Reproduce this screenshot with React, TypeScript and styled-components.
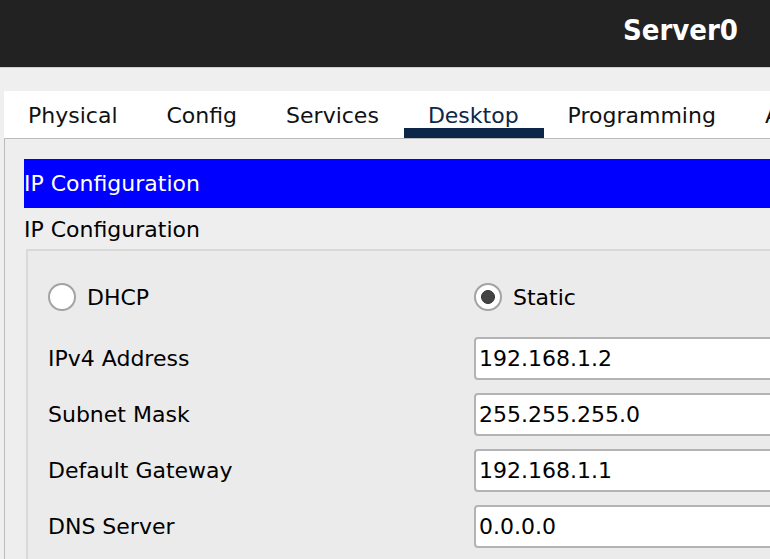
import React from "react";
import styled, { createGlobalStyle } from "styled-components";

const Global = createGlobalStyle`
  html, body {
    margin: 0;
    padding: 0;
    background: #efefef;
    overflow: hidden;
  }
  body {
    font-family: "DejaVu Sans", "Liberation Sans", sans-serif;
  }
  * { box-sizing: border-box; }
`;

const Page = styled.div`
  width: 770px;
  height: 559px;
  overflow: hidden;
  display: flex;
  flex-direction: column;
  background: #efefef;
`;

const Header = styled.header`
  flex: none;
  height: 68px;
  background: #222222;
  border-bottom: 1px solid #cfcfcf;
  display: flex;
  justify-content: flex-end;
  align-items: flex-start;
  padding: 13px 32px 0 0;
`;

const Title = styled.h1`
  margin: 0;
  color: #ffffff;
  font-family: "DejaVu Sans Condensed", "DejaVu Sans", sans-serif;
  font-stretch: condensed;
  font-weight: bold;
  font-size: 29px;
  line-height: normal;
`;

const Body = styled.div`
  flex: 1;
  margin: 23px 0 0 4px;
  display: flex;
  flex-direction: column;
  min-width: 0;
`;

const TabBar = styled.nav`
  flex: none;
  height: 48px;
  background: #ffffff;
  border-bottom: 1px solid #bbbbbb;
  display: flex;
  align-items: stretch;
  overflow: hidden;
  white-space: nowrap;
`;

const Tab = styled.div<{ $active?: boolean }>`
  flex: none;
  padding: 12px 25px 0 24px;
  font-size: 22px;
  line-height: normal;
  color: ${(p) => (p.$active ? "#0c2648" : "#111111")};
  border-bottom: 10px solid ${(p) => (p.$active ? "#0c2648" : "transparent")};
`;

const Panel = styled.section`
  flex: 1;
  background: #eeeeee;
  border-left: 1px solid #bbbbbb;
  padding: 20px 0 0 19px;
  overflow: hidden;
  display: flex;
  flex-direction: column;
`;

const Banner = styled.div`
  flex: none;
  width: 900px;
  height: 49px;
  background: #0000ff;
  color: #ffffff;
  font-size: 22px;
  line-height: 49px;
`;

const SectionLabel = styled.div`
  margin-top: 9px;
  font-size: 22px;
  line-height: normal;
  color: #000000;
`;

const Group = styled.div`
  margin: 7px 0 0 2px;
  width: 900px;
  flex: 1;
  background: #ebebeb;
  border: 2px solid #d9d9d9;
  border-right: none;
  border-bottom: none;
  padding: 32px 0 0 20px;
  display: grid;
  grid-template-columns: 426px 400px;
  grid-template-rows: 41px;
  grid-auto-rows: 43px;
  row-gap: 13px;
  align-content: start;
`;

const RadioRow = styled.label`
  height: 28px;
  display: flex;
  align-items: center;
  gap: 11px;
  font-size: 22px;
  color: #000000;
  align-self: start;
`;

const RadioCircle = styled.span<{ $checked?: boolean }>`
  flex: none;
  width: 28px;
  height: 28px;
  border-radius: 50%;
  border: 2px solid #a3a3a3;
  background: #ffffff;
  display: flex;
  align-items: center;
  justify-content: center;
  &::after {
    content: "";
    display: ${(p) => (p.$checked ? "block" : "none")};
    width: 12px;
    height: 12px;
    border-radius: 50%;
    background: #444444;
    border: 1px solid #333333;
  }
`;

const FieldLabel = styled.div`
  display: flex;
  align-items: center;
  font-size: 22px;
  color: #000000;
`;

const Input = styled.div`
  height: 43px;
  background: #ffffff;
  border: 2px solid #b3b3b3;
  border-radius: 4px;
  padding-left: 3px;
  display: flex;
  align-items: center;
  font-size: 22px;
  color: #000000;
`;

const tabs = ["Physical", "Config", "Services", "Desktop", "Programming", "Attributes"];

const fields = [
  { label: "IPv4 Address", value: "192.168.1.2" },
  { label: "Subnet Mask", value: "255.255.255.0" },
  { label: "Default Gateway", value: "192.168.1.1" },
  { label: "DNS Server", value: "0.0.0.0" },
];

export default function App() {
  return (
    <>
      <Global />
      <Page>
        <Header>
          <Title>Server0</Title>
        </Header>
        <Body>
          <TabBar>
            {tabs.map((t) => (
              <Tab key={t} $active={t === "Desktop"}>
                {t}
              </Tab>
            ))}
          </TabBar>
          <Panel>
            <Banner>IP Configuration</Banner>
            <SectionLabel>IP Configuration</SectionLabel>
            <Group>
              <RadioRow>
                <RadioCircle />
                DHCP
              </RadioRow>
              <RadioRow>
                <RadioCircle $checked />
                Static
              </RadioRow>
              {fields.map((f) => (
                <React.Fragment key={f.label}>
                  <FieldLabel>{f.label}</FieldLabel>
                  <Input>{f.value}</Input>
                </React.Fragment>
              ))}
            </Group>
          </Panel>
        </Body>
      </Page>
    </>
  );
}
